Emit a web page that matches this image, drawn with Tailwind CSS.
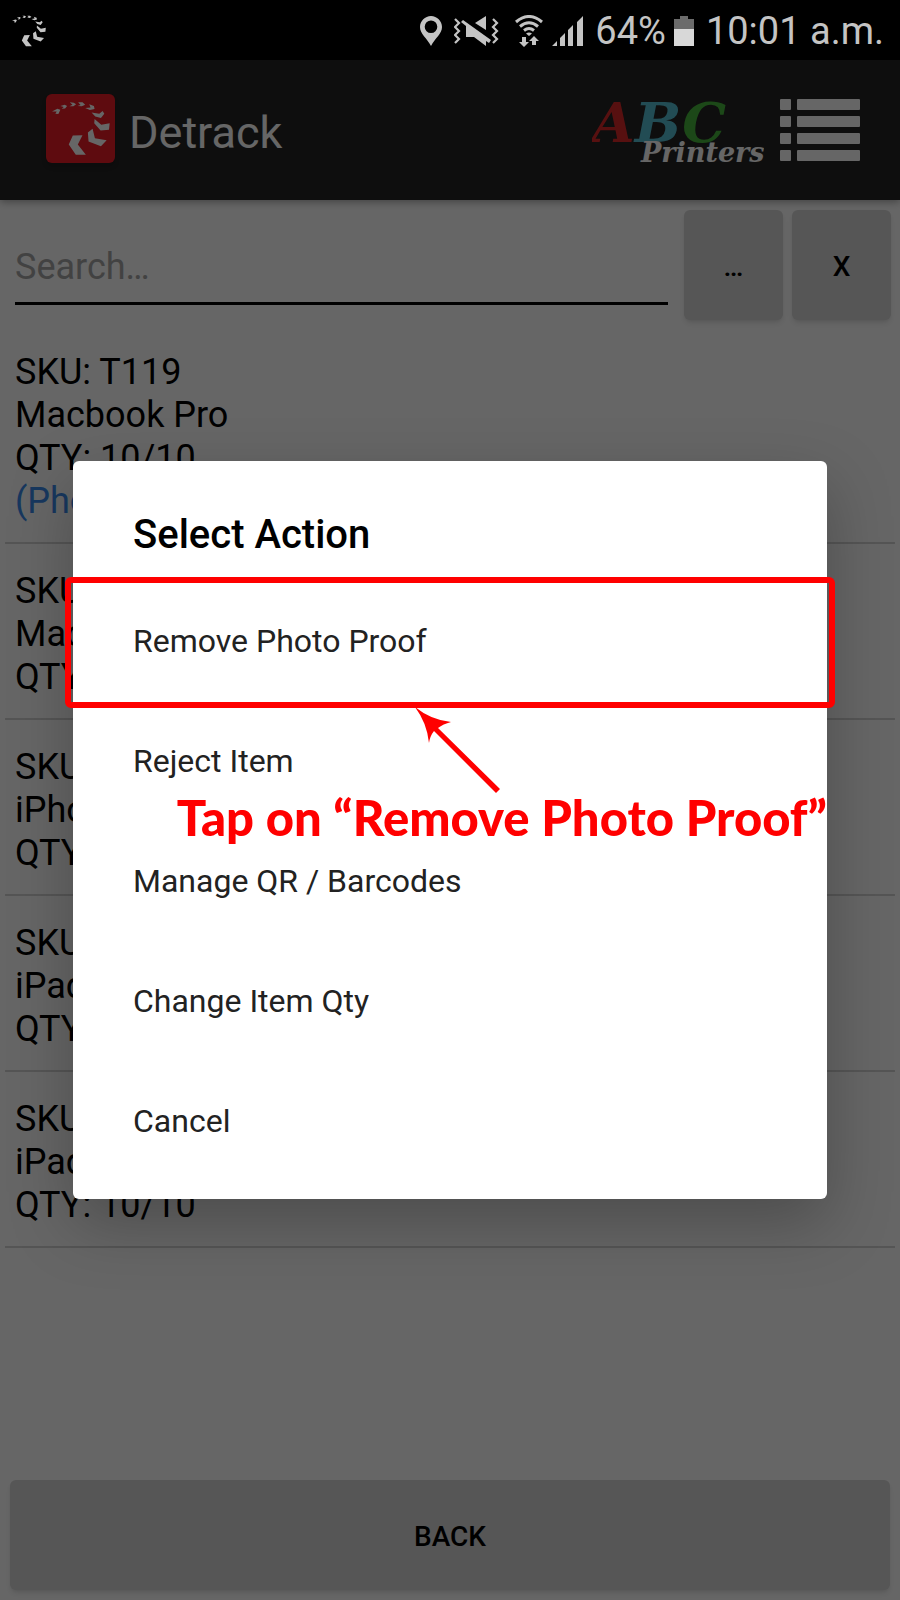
<!DOCTYPE html>
<html lang="en">
<head>
  <meta charset="utf-8">
  <meta name="viewport" content="width=device-width, initial-scale=1">
  <title>Detrack</title>
  <script src="https://cdn.jsdelivr.net/npm/@tailwindcss/browser@4"></script>
</head>
<body class="min-h-screen flex flex-col bg-white font-[Roboto,sans-serif] text-black">
  <svg class="hidden">
    <symbol id="tracks" viewBox="157 303 173 158">
      <path d="M219 403L248 402L234 430L258 460L228 460L207 430ZM278 383L285 411L320 417L303 435L266 421L264 394ZM284 354L304 371L329 366L327 386L302 388L283 366ZM275 334L298 338L308 330L313 338L303 351L286 346ZM256 321L272 319L268 310L282 315L284 324L270 327ZM233 315L242 312L235 304L248 304L256 311L246 316ZM209 316L218 311L210 304L222 305L229 310L221 316ZM186 323L192 318L182 315L195 311L202 315L196 322ZM157 331L173 323L182 326L176 339L167 338L171 331Z"/>
    </symbol>
  </svg>

  <!-- status bar -->
  <div class="h-[60px] bg-black text-[#c4c4c4] flex items-center pt-[2px] pl-3 pr-4">
    <svg class="w-[34px] h-8 fill-current"><use href="#tracks"/></svg>
    <svg class="ml-auto w-[22px] h-[30px] fill-current" viewBox="0 0 22 30">
      <path fill-rule="evenodd" d="M11 0C5 0 0 5 0 11C0 18 7 22 11 30C15 22 22 18 22 11C22 5 17 0 11 0ZM11 4.500A6.300 6.300 0 1 1 11 17.100A6.300 6.300 0 1 1 11 4.500Z"/>
    </svg>
    <svg class="ml-3 w-[45px] h-[30px] fill-current" viewBox="0 0 45 30">
      <path d="M1 3L5 7L1 11L5 15L1 19L5 23L1 27M39 3L43 7L39 11L43 15L39 19L43 23L39 27" fill="none" stroke="currentColor" stroke-width="2.200"/>
      <path d="M32 0V14L21 7ZM9 4L37 24L35 27L32 25V30L20 21H12V10L7 6Z"/>
    </svg>
    <svg class="ml-4 w-[28px] h-[32px] fill-current" viewBox="0 0 28 32">
      <path d="M1 7Q14 -4 27 7M5 11.500Q14 4 23 11.500M9 15.500Q14 11.500 19 15.500" fill="none" stroke="currentColor" stroke-width="3"/>
      <path d="M11 18.500Q14 16.500 17 18.500L14 21ZM7 22H11V27H14L9 32L4 27H7ZM17 30H21V26H24L19 21L14 26H17Z"/>
    </svg>
    <svg class="ml-[9px] w-[31px] h-[30px] fill-current" viewBox="0 0 31 30">
      <path d="M0 30L5 25V30ZM8 22L13 17V30H8ZM16 14L21 9V30H16ZM25 6L31 0V30H25Z"/>
    </svg>
    <span class="ml-3 text-[38px] leading-none">64%</span>
    <svg class="ml-2 w-5 h-[30px]" viewBox="0 0 20 30">
      <path fill="#6b6b6b" d="M6 0H14V3H20V13H0V3H6Z"/>
      <path fill="#d8d8d8" d="M0 13H20V30H0Z"/>
    </svg>
    <span class="ml-3 text-[38px] leading-none">10:01 a.m.</span>
  </div>

  <div class="relative flex-1 flex flex-col">
    <header class="h-[140px] bg-[#232323] flex items-center pl-[46px] pr-10 shadow-[0_2px_8px_rgba(0,0,0,0.35)]">
      <div class="size-[69px] mb-1 rounded-md bg-[#eb1c26] grid place-items-center shadow-md">
        <svg class="w-[58px] h-[53px] fill-white"><use href="#tracks"/></svg>
      </div>
      <h1 class="ml-[14px] pt-1 text-[45px] leading-none text-white">Detrack</h1>
      <svg class="ml-auto mt-1 w-[172px] h-[80px]" viewBox="0 0 172 80" font-family="DejaVu Serif, serif" font-weight="bold" font-style="italic">
        <text x="0" y="50" font-size="55"><tspan fill="#d92a2a">A</tspan><tspan fill="#55bdd2">B</tspan><tspan fill="#46b53c">C</tspan></text>
        <text x="49" y="70" font-size="27" fill="#fff">Printers</text>
      </svg>
      <button aria-label="Menu" class="ml-4">
        <svg class="w-20 h-[63px] fill-white" viewBox="0 0 80 63">
          <g id="bar"><rect width="11" height="11" rx="1"/><rect x="17" width="63" height="11" rx="1"/></g>
          <use href="#bar" y="17"/>
          <use href="#bar" y="34"/>
          <use href="#bar" y="51"/>
        </svg>
      </button>
    </header>

    <main class="flex-1 flex flex-col">
      <div class="flex items-start pt-[10px] pl-[15px] pr-[9px] h-[125px]">
        <input type="text" aria-label="Search" placeholder="Search…" class="flex-1 min-w-0 h-[95px] pt-[22px] text-[36px] border-b-3 border-black placeholder:text-[#a6a6a6] outline-none">
        <button class="ml-4 w-[99px] h-[110px] pt-1 rounded-md bg-[#d6d6d6] text-[28px] font-medium shadow-md">…</button>
        <button class="ml-[9px] w-[99px] h-[110px] pt-1 rounded-md bg-[#d6d6d6] text-[28px] font-medium shadow-md">X</button>
      </div>

      <ul class="px-[5px] text-[36px] leading-[43px]">
        <li class="pt-[26px] pb-[19px] pl-[10px] border-b-2 border-[#d4d4d4]">
          <p>SKU: T119</p>
          <p>Macbook Pro</p>
          <p>QTY: 10/10</p>
          <p class="text-[#3b8beb]">(Photo)</p>
        </li>
        <li class="pt-[26px] pb-[19px] pl-[10px] border-b-2 border-[#d4d4d4]">
          <p>SKU: T120</p>
          <p>Macbook Air</p>
          <p>QTY: 10/10</p>
        </li>
        <li class="pt-[26px] pb-[19px] pl-[10px] border-b-2 border-[#d4d4d4]">
          <p>SKU: T121</p>
          <p>iPhone</p>
          <p>QTY: 10/10</p>
        </li>
        <li class="pt-[26px] pb-[19px] pl-[10px] border-b-2 border-[#d4d4d4]">
          <p>SKU: T122</p>
          <p>iPad Air</p>
          <p>QTY: 10/10</p>
        </li>
        <li class="pt-[26px] pb-[19px] pl-[10px] border-b-2 border-[#d4d4d4]">
          <p>SKU: T123</p>
          <p>iPad Mini</p>
          <p>QTY: 10/10</p>
        </li>
      </ul>

      <div class="mt-auto px-[10px] pb-[10px] flex">
        <button class="flex-1 h-[110px] pt-1 rounded-md bg-[#d6d6d6] text-[28px] font-medium shadow-md">BACK</button>
      </div>
    </main>

    <!-- action dialog -->
    <div class="absolute inset-0 bg-black/60 flex items-center px-[73px]">
      <div role="dialog" aria-labelledby="dialog-title" class="flex-1 pb-[18px] bg-white rounded-md shadow-[0_24px_64px_rgba(0,0,0,0.25)]">
        <h2 id="dialog-title" class="h-[120px] pt-[50px] px-[60px] text-[40px] leading-[48px] font-medium">Select Action</h2>
        <div class="flex flex-col text-[32px] text-[#222]">
          <div class="relative flex">
            <button class="flex-1 h-[120px] px-[60px] text-left">Remove Photo Proof</button>
            <div class="absolute -inset-x-2 -top-1 -bottom-[7px] border-6 border-[#f00] rounded-md pointer-events-none"></div>
            <!-- callout -->
            <div class="absolute right-0 top-[126px] pointer-events-none text-[#f00]">
              <svg class="w-[86px] h-[86px] ml-[238px] fill-current" viewBox="0 0 86 86">
                <path d="M0 0Q16 13 36 15Q28 17 23 21L85 82L81 86L19 24Q15 29 14 36Q12 16 0 0Z"/>
              </svg>
              <p class="text-[49px] leading-[48px] font-[Lato,sans-serif] font-black whitespace-nowrap">Tap on “Remove Photo Proof”</p>
            </div>
          </div>
          <button class="h-[120px] px-[60px] text-left">Reject Item</button>
          <button class="h-[120px] px-[60px] text-left">Manage QR / Barcodes</button>
          <button class="h-[120px] px-[60px] text-left">Change Item Qty</button>
          <button class="h-[120px] px-[60px] text-left">Cancel</button>
        </div>
      </div>
    </div>
  </div>
</body>
</html>
